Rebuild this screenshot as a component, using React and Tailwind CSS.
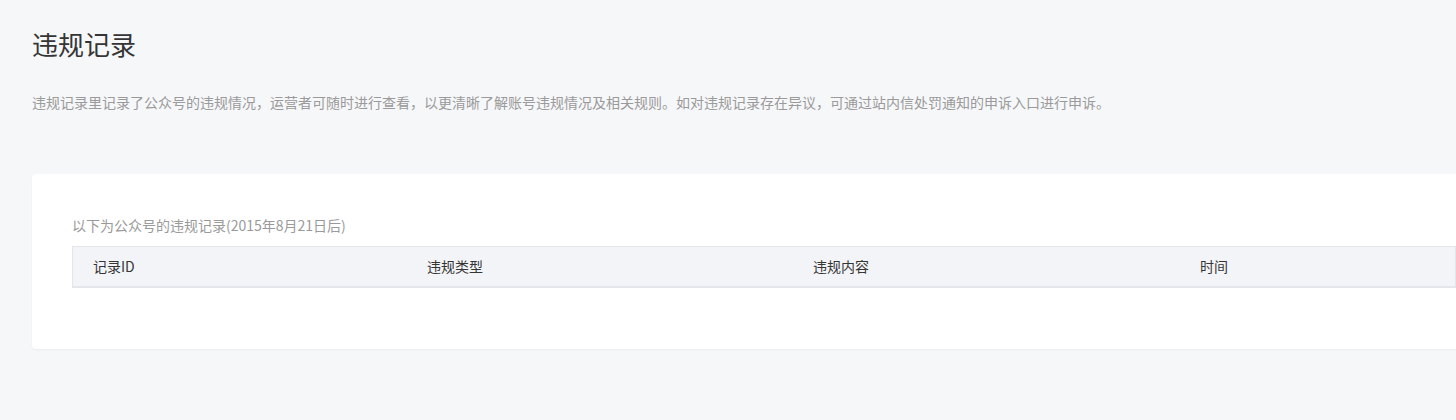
import React from 'react';

const COLUMNS = [
  { label: '记录ID', width: 'w-[334px]' },
  { label: '违规类型', width: 'w-[386px]' },
  { label: '违规内容', width: 'w-[387px]' },
  { label: '时间', width: 'flex-1' },
];

const App = () => {
  return (
    <div
      className="w-full min-h-[420px] overflow-hidden bg-[#f6f7f9] px-8 pt-[26px] pb-[70px]"
      style={{ fontFamily: '"Noto Sans CJK SC", "Noto Sans", sans-serif' }}
    >
      <h1 className="text-[26px] leading-[36px] text-[#353535] font-normal">违规记录</h1>
      <p className="mt-[30px] text-[14px] leading-[20px] text-[#9a9a9a] whitespace-nowrap">
        违规记录里记录了公众号的违规情况，运营者可随时进行查看，以更清晰了解账号违规情况及相关规则。如对违规记录存在异议，可通过站内信处罚通知的申诉入口进行申诉。
      </p>

      {/* Records card */}
      <div className="mt-[62px] w-[1464px] rounded bg-white px-10 pt-[40px] pb-[61px] shadow-[0_1px_2px_rgba(0,0,0,0.05)]">
        <p className="text-[14px] leading-[22px] text-[#9a9a9a]">以下为公众号的违规记录(2015年8月21日后)</p>
        <div className="mt-[10px] flex h-[42px] items-center border border-[#e4e6eb] border-b-2 bg-[#f3f4f7]">
          {COLUMNS.map(c => (
            <div key={c.label} className={`${c.width} pl-[20px] text-[14px] text-[#353535]`}>
              {c.label}
            </div>
          ))}
        </div>
      </div>
    </div>
  );
};

export default App;
